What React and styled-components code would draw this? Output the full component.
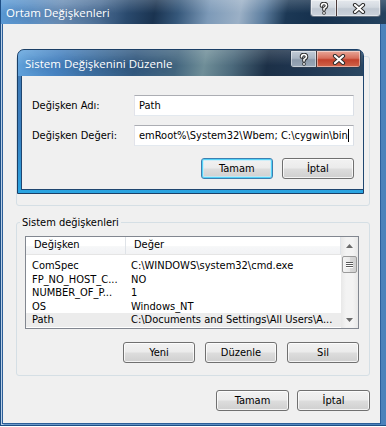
import styled, { createGlobalStyle } from "styled-components";

const GlobalStyle = createGlobalStyle`
  html, body {
    margin: 0;
    padding: 0;
    background: #ffffff;
  }
  body {
    width: 386px;
    height: 427px;
    overflow: hidden;
    font-family: "DejaVu Sans Condensed", "DejaVu Sans", sans-serif;
    font-size: 11px;
    color: #000;
  }
`;

const outerGlass = `
  linear-gradient(180deg, rgba(255,255,255,0.18) 0%, rgba(255,255,255,0) 55%),
  linear-gradient(100deg, #5a9ad6 0%, #5b8fc4 8%, #6a8db4 16%, #4d6f96 26%, #2a4a6e 33%,
    #1a3350 40%, #35577a 46%, #7d9ab8 54%, #9bb0c6 62%, #5e7fa0 68%, #1c3855 74%,
    #15304d 82%, #24425f 100%)
`;

const innerGlass = `
  linear-gradient(180deg, rgba(255,255,255,0.16) 0%, rgba(255,255,255,0) 60%),
  linear-gradient(100deg, #62a4dd 0%, #4682c0 12%, #3c6b9a 24%, #33597f 34%, #43667f 46%,
    #6f8e98 54%, #4c6a7c 62%, #1c3047 72%, #1f3550 82%, #2a4762 100%)
`;

const Window = styled.div`
  position: relative;
  width: 386px;
  height: 426px;
  box-sizing: border-box;
  display: flex;
  flex-direction: column;
  border-left: 1px solid #1d4e85;
  border-bottom: 1px solid #1d4e85;
`;

const TitleBar = styled.div`
  height: ${(p) => p.$height}px;
  flex: none;
  display: flex;
  align-items: flex-start;
  justify-content: space-between;
  padding-right: ${(p) => p.$right}px;
  background: ${(p) => (p.$inner ? innerGlass : outerGlass)};
  border-radius: ${(p) => (p.$inner ? "6px 6px 0 0" : "0")};
`;

const TitleText = styled.span`
  font-family: "Open Sans", "Noto Sans", sans-serif;
  font-size: 11.5px;
  line-height: 16px;
  color: #ffffff;
  margin: ${(p) => p.$top}px 0 0 ${(p) => p.$left}px;
  white-space: nowrap;
  text-shadow: 0 0 6px rgba(30, 60, 100, 0.35);
`;

const CaptionGroup = styled.div`
  display: flex;
  margin-top: ${(p) => p.$top}px;
  height: 17px;
  border: 1px solid ${(p) => (p.$active ? "#2c3c50" : "#5f6d7e")};
  border-top: none;
  border-radius: 0 0 4px 4px;
  overflow: hidden;
  box-sizing: border-box;
`;

const captionFill = {
  idle: "linear-gradient(180deg, #e4e8ed 0%, #d3d9e0 45%, #c0c8d2 55%, #ccd3dc 100%)",
  help: "linear-gradient(180deg, #c3ccd7 0%, #a9b5c3 45%, #8c9aab 55%, #9aa8b8 100%)",
  close: "linear-gradient(180deg, #e8a899 0%, #d76f5c 45%, #c2412c 55%, #d0654b 100%)",
};

const CaptionButton = styled.div`
  width: ${(p) => p.$w}px;
  display: flex;
  align-items: center;
  justify-content: center;
  background: ${(p) => captionFill[p.$kind]};
  box-shadow: inset 0 0 0 1px rgba(255, 255, 255, 0.45);
  & + & {
    border-left: 1px solid ${(p) => (p.$kind === "idle" ? "#7d8896" : "#4a3a3a")};
  }
`;

const Frame = styled.div`
  flex: 1;
  display: flex;
  padding: 0 5px 1px 1px;
  background: linear-gradient(90deg, #b9cfe6 0px, #b9cfe6 2px, #6f9ccb 3px, #4b82bb 100%);
`;

const Client = styled.div`
  flex: 1;
  display: flex;
  flex-direction: column;
  background: #f0f0f0;
  border: 1px solid #2d5f99;
  border-top: none;
  padding: 26px 10px 0 13px;
`;

const Group = styled.fieldset`
  margin: ${(p) => p.$gap}px 0 0 0;
  padding: 7px 10px 12px 8px;
  border: 1px solid #d5dfe5;
  border-radius: 3px;
  min-width: 0;
  height: ${(p) => (p.$height ? `${p.$height}px` : "auto")};
  box-sizing: border-box;
  display: flex;
  flex-direction: column;
`;

const Legend = styled.legend`
  padding: 0 2px;
  margin-left: -5px;
  line-height: 13px;
`;

const ListView = styled.div`
  height: 93px;
  box-sizing: border-box;
  border: 1px solid #828790;
  background: #ffffff;
  display: flex;
`;

const ListMain = styled.div`
  flex: 1;
  min-width: 0;
  display: flex;
  flex-direction: column;
`;

const HeaderRow = styled.div`
  display: grid;
  grid-template-columns: 100px 1fr;
  height: 17px;
  flex: none;
  background: linear-gradient(180deg, #ffffff 0%, #ffffff 55%, #f6f7f8 56%, #f2f3f5 100%);
  border-bottom: 1px solid #e5e5e5;
`;

const HeaderCell = styled.div`
  padding-left: 8px;
  line-height: 16px;
  white-space: nowrap;
  border-right: 1px solid #dfe3e8;
`;

const Rows = styled.div`
  padding-top: 4px;
`;

const Row = styled.div`
  display: grid;
  grid-template-columns: 100px 1fr;
  height: 13.5px;
  line-height: 13px;
  background: ${(p) => (p.$selected ? "#ececec" : "transparent")};
  white-space: nowrap;
`;

const Cell = styled.div`
  padding-left: ${(p) => (p.$first ? 6 : 5)}px;
  overflow: hidden;
`;

const ScrollBar = styled.div`
  width: 17px;
  flex: none;
  display: flex;
  flex-direction: column;
  align-items: center;
  background: linear-gradient(90deg, #e8e8e8 0%, #f3f3f3 30%, #f3f3f3 70%, #e8e8e8 100%);
`;

const Arrow = styled.div`
  height: ${(p) => p.$h}px;
  width: 100%;
  display: flex;
  align-items: center;
  justify-content: center;
  flex: none;
`;

const Thumb = styled.div`
  width: 15px;
  height: 17px;
  margin-top: 2px;
  box-sizing: border-box;
  border: 1px solid #9a9a9a;
  border-radius: 2px;
  background: linear-gradient(90deg, #f4f4f4 0%, #e9e9e9 50%, #d9d9d9 51%, #cfcfcf 100%);
  display: flex;
  flex-direction: column;
  align-items: center;
  justify-content: center;
  gap: 1px;
`;

const Grip = styled.span`
  width: 7px;
  height: 1px;
  background: #5a5a5a;
  box-shadow: 0 1px 0 #ffffff;
`;

const Track = styled.div`
  flex: 1;
`;

const ButtonRow = styled.div`
  display: flex;
  justify-content: flex-end;
  gap: ${(p) => p.$gap}px;
  margin-top: ${(p) => p.$top}px;
`;

const Button = styled.button`
  width: ${(p) => p.$w}px;
  height: 21px;
  box-sizing: border-box;
  padding: 0;
  border: 1px solid #707070;
  border-radius: 3px;
  background: linear-gradient(180deg, #f2f2f2 0%, #ebebeb 48%, #dddddd 52%, #cfcfcf 100%);
  box-shadow: inset 0 0 0 1px rgba(255, 255, 255, 0.75);
  font: inherit;
  color: #000;
  text-align: center;
`;

const DefaultButton = styled(Button)`
  border-color: #3c7fb1;
  box-shadow: inset 0 0 0 1px #54d3f8, inset 0 0 0 2px rgba(190, 236, 252, 0.7);
`;

const Dialog = styled.div`
  position: absolute;
  left: 16px;
  top: 49px;
  width: 347px;
  height: 145px;
  box-sizing: border-box;
  display: flex;
  flex-direction: column;
  border: 1px solid #1b3f66;
  border-radius: 7px 7px 0 0;
  background: linear-gradient(180deg, #3f78b2 0%, #3a7fbf 60%, #2aa5e2 100%);
  z-index: 2;
`;

const DialogFrame = styled.div`
  flex: 1;
  display: flex;
  padding: 0 3px 3px 3px;
`;

const DialogClient = styled.div`
  flex: 1;
  background: #f0f0f0;
  border: 1px solid #1f4670;
  border-top: none;
  padding: 19px 9px 0 10px;
  display: flex;
  flex-direction: column;
`;

const FieldRow = styled.div`
  display: flex;
  align-items: center;
  margin-top: ${(p) => p.$top}px;
`;

const FieldLabel = styled.span`
  width: 102px;
  flex: none;
  white-space: nowrap;
`;

const TextBox = styled.div`
  flex: 1;
  height: 21px;
  box-sizing: border-box;
  border: 1px solid;
  border-color: #abadb3 #dbdfe6 #e3e9ef #e2e3ea;
  background: #ffffff;
  padding: 0 4px;
  display: flex;
  align-items: center;
  overflow: hidden;
  white-space: nowrap;
`;

const Caret = styled.span`
  display: inline-block;
  width: 1px;
  height: 13px;
  background: #000;
  flex: none;
`;

function CloseGlyph() {
  return (
    <svg width="14" height="11" viewBox="0 0 14 11">
      <path d="M3 2 L11 9 M11 2 L3 9" stroke="#2e2e2e" strokeWidth="4.2" strokeLinecap="round" fill="none" />
      <path d="M3 2 L11 9 M11 2 L3 9" stroke="#ffffff" strokeWidth="2.2" strokeLinecap="round" fill="none" />
    </svg>
  );
}

function HelpGlyph() {
  return (
    <svg width="10" height="13" viewBox="0 0 10 13">
      <path d="M2.5 4 Q2.5 1.5 5 1.5 Q7.5 1.5 7.5 3.8 Q7.5 5.3 5 6.5 L5 8" stroke="#2e2e2e" strokeWidth="3.6" strokeLinecap="round" fill="none" />
      <circle cx="5" cy="11" r="1.8" fill="#2e2e2e" />
      <path d="M2.5 4 Q2.5 1.5 5 1.5 Q7.5 1.5 7.5 3.8 Q7.5 5.3 5 6.5 L5 8" stroke="#ffffff" strokeWidth="1.6" strokeLinecap="round" fill="none" />
      <circle cx="5" cy="11" r="0.9" fill="#ffffff" />
    </svg>
  );
}

function Triangle({ down }) {
  return (
    <svg width="7" height="4" viewBox="0 0 7 4">
      <path d={down ? "M0 0 L7 0 L3.5 4 Z" : "M0 4 L7 4 L3.5 0 Z"} fill="#6b6b6b" />
    </svg>
  );
}

const variables = [
  { name: "ComSpec", value: "C:\\WINDOWS\\system32\\cmd.exe" },
  { name: "FP_NO_HOST_C...", value: "NO" },
  { name: "NUMBER_OF_P...", value: "1" },
  { name: "OS", value: "Windows_NT" },
  { name: "Path", value: "C:\\Documents and Settings\\All Users\\A...", selected: true },
];

export default function App() {
  return (
    <>
      <GlobalStyle />
      <Window>
        <TitleBar $height={24} $right={5}>
          <TitleText $top={5} $left={5}>Ortam Değişkenleri</TitleText>
          <CaptionGroup $top={0}>
            <CaptionButton $w={25} $kind="idle">
              <HelpGlyph />
            </CaptionButton>
            <CaptionButton $w={43} $kind="idle">
              <CloseGlyph />
            </CaptionButton>
          </CaptionGroup>
        </TitleBar>
        <Frame>
          <Client>
            <Group $height={156} $gap={0}>
              <Legend>Ahmet için kullanıcı değişkenleri</Legend>
            </Group>
            <Group $gap={10}>
              <Legend>Sistem değişkenleri</Legend>
              <ListView>
                <ListMain>
                  <HeaderRow>
                    <HeaderCell>Değişken</HeaderCell>
                    <HeaderCell>Değer</HeaderCell>
                  </HeaderRow>
                  <Rows>
                    {variables.map((v) => (
                      <Row key={v.name} $selected={v.selected}>
                        <Cell $first>{v.name}</Cell>
                        <Cell>{v.value}</Cell>
                      </Row>
                    ))}
                  </Rows>
                </ListMain>
                <ScrollBar>
                  <Arrow $h={17}>
                    <Triangle />
                  </Arrow>
                  <Thumb>
                    <Grip />
                    <Grip />
                    <Grip />
                  </Thumb>
                  <Track />
                  <Arrow $h={17}>
                    <Triangle down />
                  </Arrow>
                </ScrollBar>
              </ListView>
              <ButtonRow $gap={10} $top={13}>
                <Button $w={72}>Yeni</Button>
                <Button $w={72}>Düzenle</Button>
                <Button $w={72}>Sil</Button>
              </ButtonRow>
            </Group>
            <ButtonRow $gap={8} $top={14}>
              <Button $w={73}>Tamam</Button>
              <Button $w={73}>İptal</Button>
            </ButtonRow>
          </Client>
        </Frame>

        <Dialog>
          <TitleBar $height={26} $right={2} $inner>
            <TitleText $top={6} $left={7}>Sistem Değişkenini Düzenle</TitleText>
            <CaptionGroup $top={1} $active>
              <CaptionButton $w={25} $kind="help">
                <HelpGlyph />
              </CaptionButton>
              <CaptionButton $w={43} $kind="close">
                <CloseGlyph />
              </CaptionButton>
            </CaptionGroup>
          </TitleBar>
          <DialogFrame>
            <DialogClient>
              <FieldRow $top={0}>
                <FieldLabel>Değişken Adı:</FieldLabel>
                <TextBox>Path</TextBox>
              </FieldRow>
              <FieldRow $top={9}>
                <FieldLabel>Değişken Değeri:</FieldLabel>
                <TextBox>
                  emRoot%\System32\Wbem; C:\cygwin\bin
                  <Caret />
                </TextBox>
              </FieldRow>
              <ButtonRow $gap={9} $top={12}>
                <DefaultButton $w={72}>Tamam</DefaultButton>
                <Button $w={72}>İptal</Button>
              </ButtonRow>
            </DialogClient>
          </DialogFrame>
        </Dialog>
      </Window>
    </>
  );
}
